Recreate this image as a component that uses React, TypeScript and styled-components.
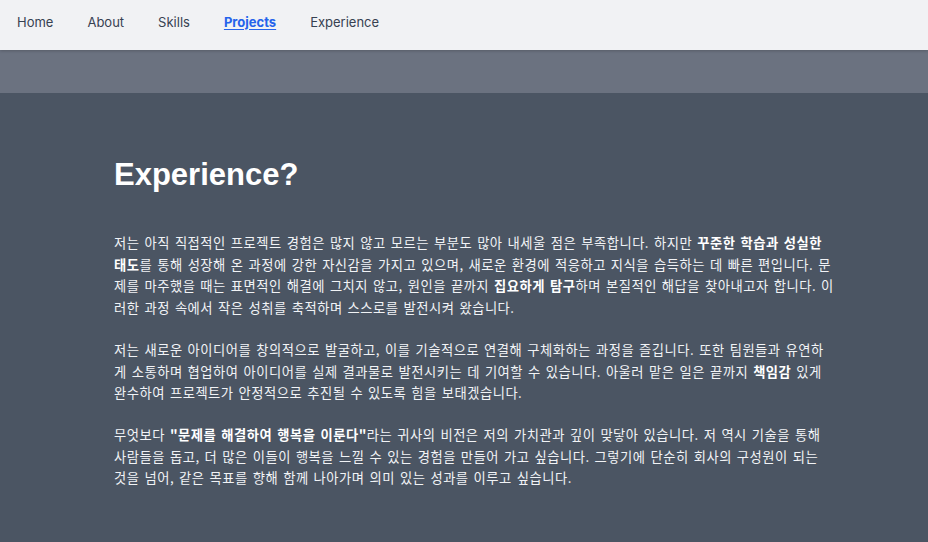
import React from "react";
import styled, { createGlobalStyle } from "styled-components";

const GlobalStyle = createGlobalStyle`
  html, body { margin: 0; padding: 0; background: #4b5563; }
  body { font-family: Inter, "Noto Sans", sans-serif; }
  * { box-sizing: border-box; }
`;

const Page = styled.div`
  min-height: 542px;
  display: flex;
  flex-direction: column;
  background: #4b5563;
`;

const NavBar = styled.nav`
  height: 50px;
  background: #f1f2f4;
  display: flex;
  align-items: center;
  gap: 34px;
  padding: 0 17px 7px;
  box-shadow: 0 1px 3px rgba(0, 0, 0, 0.2);
  position: relative;
  z-index: 1;
`;

const NavLink = styled.a<{ $active?: boolean }>`
  font-family: Inter, "Noto Sans", sans-serif;
  font-size: 13px;
  color: ${(p) => (p.$active ? "#2563eb" : "#374151")};
  font-weight: ${(p) => (p.$active ? 700 : 400)};
  text-decoration: ${(p) => (p.$active ? "underline" : "none")};
  text-underline-offset: 2px;
  cursor: pointer;
`;

const Band = styled.div`
  height: 43px;
  background: #6b7280;
`;

const Main = styled.main`
  flex: 1;
  background: #4b5563;
  padding: 64px 0 40px 114px;
`;

const Content = styled.section`
  width: 721px;
`;

const Title = styled.h1`
  margin: 0 0 39px;
  font-family: "Liberation Sans", Arial, sans-serif;
  font-weight: 700;
  font-size: 31px;
  line-height: 36px;
  color: #ffffff;
`;

const Paragraph = styled.p`
  margin: 0 0 20px;
  font-family: "Noto Sans CJK KR", "Noto Sans", sans-serif;
  font-size: 13.3px;
  line-height: 21.7px;
  letter-spacing: 0.5px;
  word-spacing: 1.5px;
  color: #f1f3f6;
`;

const Strong = styled.strong`
  font-weight: 700;
  color: #ffffff;
`;

export default function App() {
  const links = ["Home", "About", "Skills", "Projects", "Experience"];
  return (
    <Page>
      <GlobalStyle />
      <NavBar>
        {links.map((l) => (
          <NavLink key={l} $active={l === "Projects"}>
            {l}
          </NavLink>
        ))}
      </NavBar>
      <Band />
      <Main>
        <Content>
          <Title>Experience?</Title>
          <Paragraph>
            저는 아직 직접적인 프로젝트 경험은 많지 않고 모르는 부분도 많아 내세울 점은 부족합니다. 하지만{" "}
            <Strong>꾸준한 학습과 성실한 태도</Strong>를 통해 성장해 온 과정에 강한 자신감을 가지고 있으며, 새로운
            환경에 적응하고 지식을 습득하는 데 빠른 편입니다. 문제를 마주했을 때는 표면적인 해결에 그치지 않고,
            원인을 끝까지 <Strong>집요하게 탐구</Strong>하며 본질적인 해답을 찾아내고자 합니다. 이러한 과정 속에서
            작은 성취를 축적하며 스스로를 발전시켜 왔습니다.
          </Paragraph>
          <Paragraph>
            저는 새로운 아이디어를 창의적으로 발굴하고, 이를 기술적으로 연결해 구체화하는 과정을 즐깁니다. 또한
            팀원들과 유연하게 소통하며 협업하여 아이디어를 실제 결과물로 발전시키는 데 기여할 수 있습니다. 아울러
            맡은 일은 끝까지 <Strong>책임감</Strong> 있게 완수하여 프로젝트가 안정적으로 추진될 수 있도록 힘을
            보태겠습니다.
          </Paragraph>
          <Paragraph>
            무엇보다 <Strong>"문제를 해결하여 행복을 이룬다"</Strong>라는 귀사의 비전은 저의 가치관과 깊이 맞닿아
            있습니다. 저 역시 기술을 통해 사람들을 돕고, 더 많은 이들이 행복을 느낄 수 있는 경험을 만들어 가고
            싶습니다. 그렇기에 단순히 회사의 구성원이 되는 것을 넘어, 같은 목표를 향해 함께 나아가며 의미 있는
            성과를 이루고 싶습니다.
          </Paragraph>
        </Content>
      </Main>
    </Page>
  );
}
